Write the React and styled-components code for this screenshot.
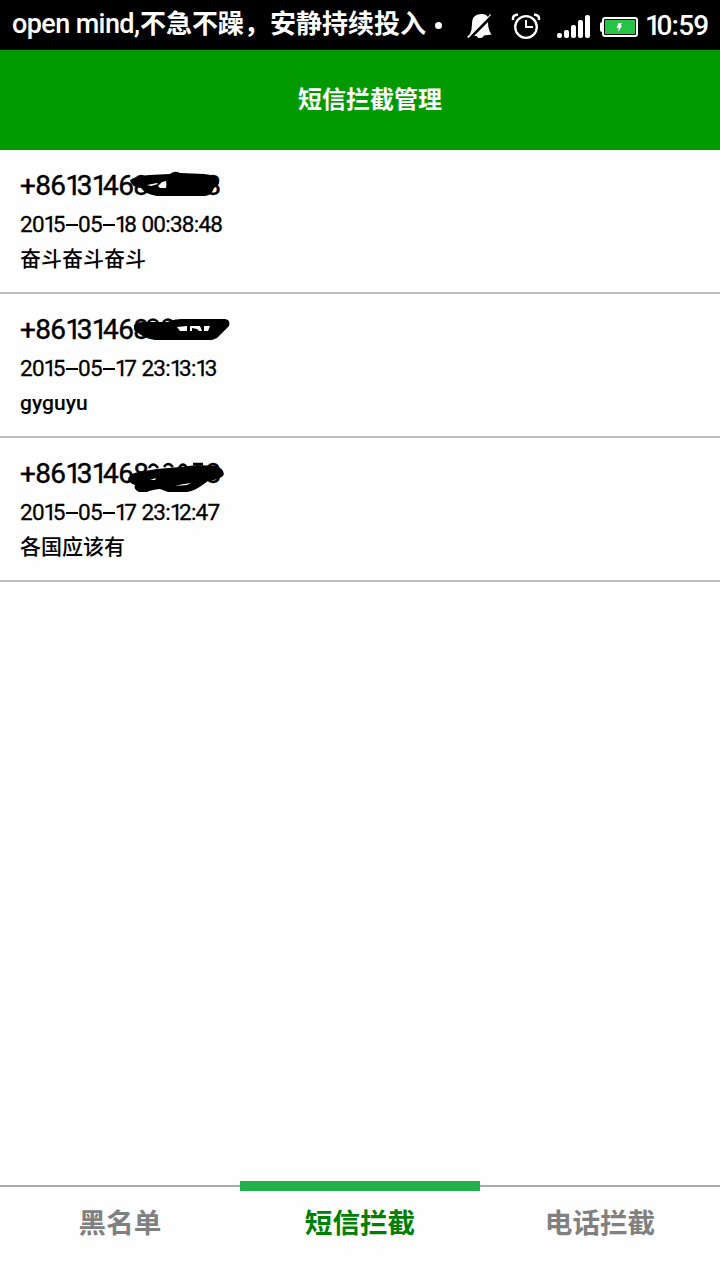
import React from 'react';
import styled, { createGlobalStyle } from 'styled-components';

const GlobalStyle = createGlobalStyle`
  * { box-sizing: border-box; }
  body { margin: 0; background: #fefefe; }
`;

const Screen = styled.div`
  width: 720px;
  height: 1280px;
  display: flex;
  flex-direction: column;
  overflow: hidden;
  background: #fefefe;
  color: #000;
  font-family: Roboto, 'Noto Sans CJK SC', sans-serif;
`;

const StatusBar = styled.div`
  height: 50px;
  flex: none;
  display: flex;
  align-items: center;
  padding: 0 0 0 12px;
  background: #000;
  color: #fff;
`;

const Ticker = styled.div`
  width: 455px;
  display: flex;
  align-items: center;
  height: 50px;
  padding-bottom: 2px;
  font-size: 26px;
  line-height: 48px;
  font-weight: 700;
  white-space: nowrap;
`;

const TickerLatin = styled.span`
  width: 128px;
  flex: none;
  font-size: 27px;
  font-weight: 500;
  letter-spacing: -0.6px;
`;

const Bullet = styled.span`
  width: 7px;
  height: 7px;
  margin: 3px 0 0 9px;
  border-radius: 50%;
  background: #fff;
`;

const StatusIcons = styled.svg`
  width: 174px;
  height: 50px;
  flex: none;
`;

const Clock = styled.div`
  margin-left: 4px;
  font-size: 28px;
  line-height: 51px;
  font-weight: 500;
  letter-spacing: -0.8px;
  white-space: nowrap;
`;

const Header = styled.header`
  height: 100px;
  flex: none;
  padding-left: 20px;
  background: #009900;
  color: #fff;
  font-size: 24px;
  font-weight: 700;
  line-height: 100px;
  text-align: center;
`;

const List = styled.main`
  flex: 1;
`;

const Message = styled.article`
  position: relative;
  height: 144px;
  padding: 17px 20px 0;
  border-bottom: 2px solid #bdbdbd;
`;

const Phone = styled.div`
  height: 38px;
  display: flex;
  font-size: 28px;
  line-height: 38px;
  font-weight: 400;
  -webkit-text-stroke: 0.4px currentColor;
  letter-spacing: -0.65px;
`;

const Tail = styled.span`
  margin-left: 57px;
`;

const Time = styled.div`
  height: 38px;
  font-size: 22.5px;
  line-height: 38px;
  font-weight: 400;
  -webkit-text-stroke: 0.3px currentColor;
  letter-spacing: -0.75px;
  word-spacing: 0.5px;
  white-space: pre;
`;

const Content = styled.div`
  height: 34px;
  font-size: 21px;
  line-height: 33px;
  font-weight: 500;
`;

const One = styled.span`
  letter-spacing: -0.16em;
`;

const Dash = styled.span`
  display: inline-block;
  width: 0.53em;
  height: 2px;
  margin: 0 0 0.28em 0.06em;
  background: currentColor;
`;

const Scribble = styled.svg`
  position: absolute;
  left: 0;
  top: 0;
  width: 250px;
  height: 70px;
`;

const Tabs = styled.nav`
  height: 99px;
  flex: none;
  display: grid;
  grid-template-columns: repeat(3, 1fr);
`;

const Tab = styled.div`
  display: flex;
  flex-direction: column;
  align-items: center;
  color: ${(p) => (p.$active ? '#008000' : '#808080')};
  font-size: 27.6px;
  line-height: 66px;
  font-weight: 700;
`;

const TabLine = styled.div`
  width: 100%;
  height: ${(p) => (p.$active ? 10 : 2)}px;
  margin: ${(p) => (p.$active ? '0' : '4px 0')};
  background: ${(p) => (p.$active ? '#22b14c' : '#a9a9a9')};
`;

const Numerals = ({ text }) =>
  [...text].map((c, i) => {
    if (c === '1') return <One key={i}>1</One>;
    if (c === '-') return <Dash key={i} />;
    return <React.Fragment key={i}>{c}</React.Fragment>;
  });

const messages = [
  {
    phone: '+86131468',
    tail: '8',
    time: '2015-05-18 00:38:48',
    content: '奋斗奋斗奋斗',
    ink: 'M130 30Q135 26 149 25L170 24Q175 20 180 23L204 24Q216 25 219 31Q220 35 214 38Q212 45 205 46L157 46Q145 44 141 38Q131 37 130 30Z',
    gaps: 'M147 35L157 33L158 34L151 36ZM158 36L162 32L166 31Q167 34 166 38L160 38Z',
  },
  {
    phone: '+86131468',
    time: '2015-05-17 23:13:13',
    content: 'gyguyu',
    ink: 'M134 31Q136 28 144 28L167 28Q174 25 181 25L225 25Q231 26 229 32L217 44L212 46L155 46Q147 45 141 41L134 36Z',
    marks: 'M148 28Q153 23 158 28M163 28Q168 23 173 28',
    gaps: 'M177 33L187 32V37L180 37ZM190 32H200L202 37H199L197 35L192 34V37H190ZM204 32H210L208 37H204Z',
  },
  {
    phone: '+86131468',
    tail: '8',
    time: '2015-05-17 23:12:47',
    content: '各国应该有',
    ink: 'M128 41Q129 36 138 34L157 31L180 29L197 27L217 28Q226 33 223 38Q218 42 208 43L201 48Q194 53 187 54L168 54L160 51Q151 52 147 54H139Q133 51 135 47Q129 45 128 41Z',
    marks: 'M149 30Q153 23 158 30M164 29Q168 23 173 29M179 30Q183 23 187 30M193 26H203',
    gaps: 'M150 42L156 40L155 42ZM175 48Q182 46 191 45L187 47Z',
  },
];

function StatusGlyphs() {
  return (
    <StatusIcons viewBox="467 0 174 50">
      <path
        d="M470 34Q472 30 472 24Q472 18 475 16Q477 14 482 14Q486 14 488 17L490 14L491 15L468.5 38L467 37Z"
        fill="#fff"
      />
      <path d="M488 22Q488 30 491.5 34.5L484 35.5Q483 38 480 38Q477 38 477 36H474Z" fill="#fff" />
      <g fill="none" stroke="#fff" strokeWidth="2.3">
        <circle cx="526" cy="27" r="10.8" />
        <path d="M513 20Q512 15 518 14.5M534 14.5Q540 15 539 20" strokeWidth="2.6" />
        <path d="M526 20V27H533" strokeWidth="2" />
      </g>
      <g fill="#fff">
        <rect x="557" y="33" width="5" height="5" rx="2" />
        <rect x="564" y="30" width="5" height="8" rx="2" />
        <rect x="571" y="25" width="5" height="13" rx="2" />
        <rect x="578" y="20" width="5" height="18" rx="2" />
        <rect x="585" y="15" width="5" height="23" rx="2" />
        <rect x="600" y="22" width="4" height="10" rx="2" />
      </g>
      <rect x="603" y="18" width="34" height="18" rx="2" fill="#000" stroke="#fff" strokeWidth="2" />
      <rect x="605" y="20" width="30" height="14" fill="#27c346" />
      <path d="M618.5 23H622L620.5 26H622L618 32L618.7 28H616.5Z" fill="#fff" />
    </StatusIcons>
  );
}

export default function App() {
  return (
    <Screen>
      <GlobalStyle />
      <StatusBar>
        <Ticker>
          <TickerLatin>open mind,</TickerLatin>
          不急不躁，安静持续投入
          <Bullet />
        </Ticker>
        <StatusGlyphs />
        <Clock>
          <Numerals text="10:59" />
        </Clock>
      </StatusBar>
      <Header>短信拦截管理</Header>
      <List>
        {messages.map((m) => (
          <Message key={m.time}>
            <Phone>
              <span>
                <Numerals text={m.phone} />
              </span>
              {m.tail && <Tail>{m.tail}</Tail>}
            </Phone>
            <Time>
              <Numerals text={m.time} />
            </Time>
            <Content>{m.content}</Content>
            <Scribble viewBox="0 0 250 70">
              <path d={m.ink} />
              {m.marks && <path d={m.marks} fill="none" stroke="#000" strokeWidth="2.4" />}
              <path d={m.gaps} fill="#fefefe" />
            </Scribble>
          </Message>
        ))}
      </List>
      <Tabs>
        <Tab>
          <TabLine />
          黑名单
        </Tab>
        <Tab $active>
          <TabLine $active />
          短信拦截
        </Tab>
        <Tab>
          <TabLine />
          电话拦截
        </Tab>
      </Tabs>
    </Screen>
  );
}
